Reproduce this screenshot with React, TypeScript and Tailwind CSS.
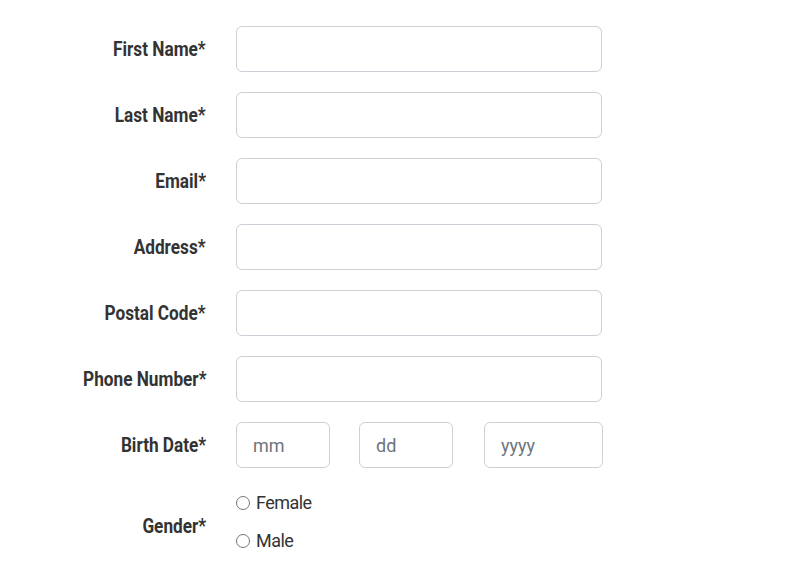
import React from "react";

const fields = [
  { label: "First Name*", name: "firstName" },
  { label: "Last Name*", name: "lastName" },
  { label: "Email*", name: "email" },
  { label: "Address*", name: "address" },
  { label: "Postal Code*", name: "postalCode" },
  { label: "Phone Number*", name: "phone" },
];

const inputCls =
  "h-[46px] rounded-md border border-[#cbd0d6] bg-white px-4 text-[18px] text-[#495057] placeholder:text-[#6c757d] outline-none";

function Label({ children, className = "" }: { children: React.ReactNode; className?: string }) {
  return (
    <label className={`w-[236px] shrink-0 pr-[30px] text-right text-[20px] leading-[28px] font-bold text-[#333] ${className}`}>
      {/* condensed look */}
      <span className="inline-block origin-right scale-x-[0.86] whitespace-nowrap">{children}</span>
    </label>
  );
}

export default function App() {
  return (
    <main
      className="min-h-[574px] bg-white pt-[26px]"
      style={{ fontFamily: "Roboto, 'Liberation Sans', sans-serif" }}
    >
      <form className="flex flex-col gap-[20px]">
        {fields.map((f) => (
          <div key={f.name} className="flex items-center">
            <Label>{f.label}</Label>
            <input name={f.name} className={`${inputCls} w-[366px]`} />
          </div>
        ))}

        {/* Birth date */}
        <div className="flex items-center">
          <Label>Birth Date*</Label>
          <div className="flex">
            <input placeholder="mm" className={`${inputCls} w-[94px]`} />
            <input placeholder="dd" className={`${inputCls} ml-[29px] w-[94px]`} />
            <input placeholder="yyyy" className={`${inputCls} ml-[31px] w-[119px]`} />
          </div>
        </div>

        {/* Gender */}
        <div className="flex items-center">
          <Label className="mt-[10px]">Gender*</Label>
          <div className="flex flex-col gap-[11px] pt-[1px]">
            <label className="flex items-center gap-[6px] text-[18px] leading-[27px] text-[#333] tracking-[-0.03em]">
              <input type="radio" name="gender" className="m-0 h-[14px] w-[14px]" />
              Female
            </label>
            <label className="flex items-center gap-[6px] text-[18px] leading-[27px] text-[#333] tracking-[-0.03em]">
              <input type="radio" name="gender" className="m-0 h-[14px] w-[14px]" />
              Male
            </label>
          </div>
        </div>
      </form>
    </main>
  );
}
